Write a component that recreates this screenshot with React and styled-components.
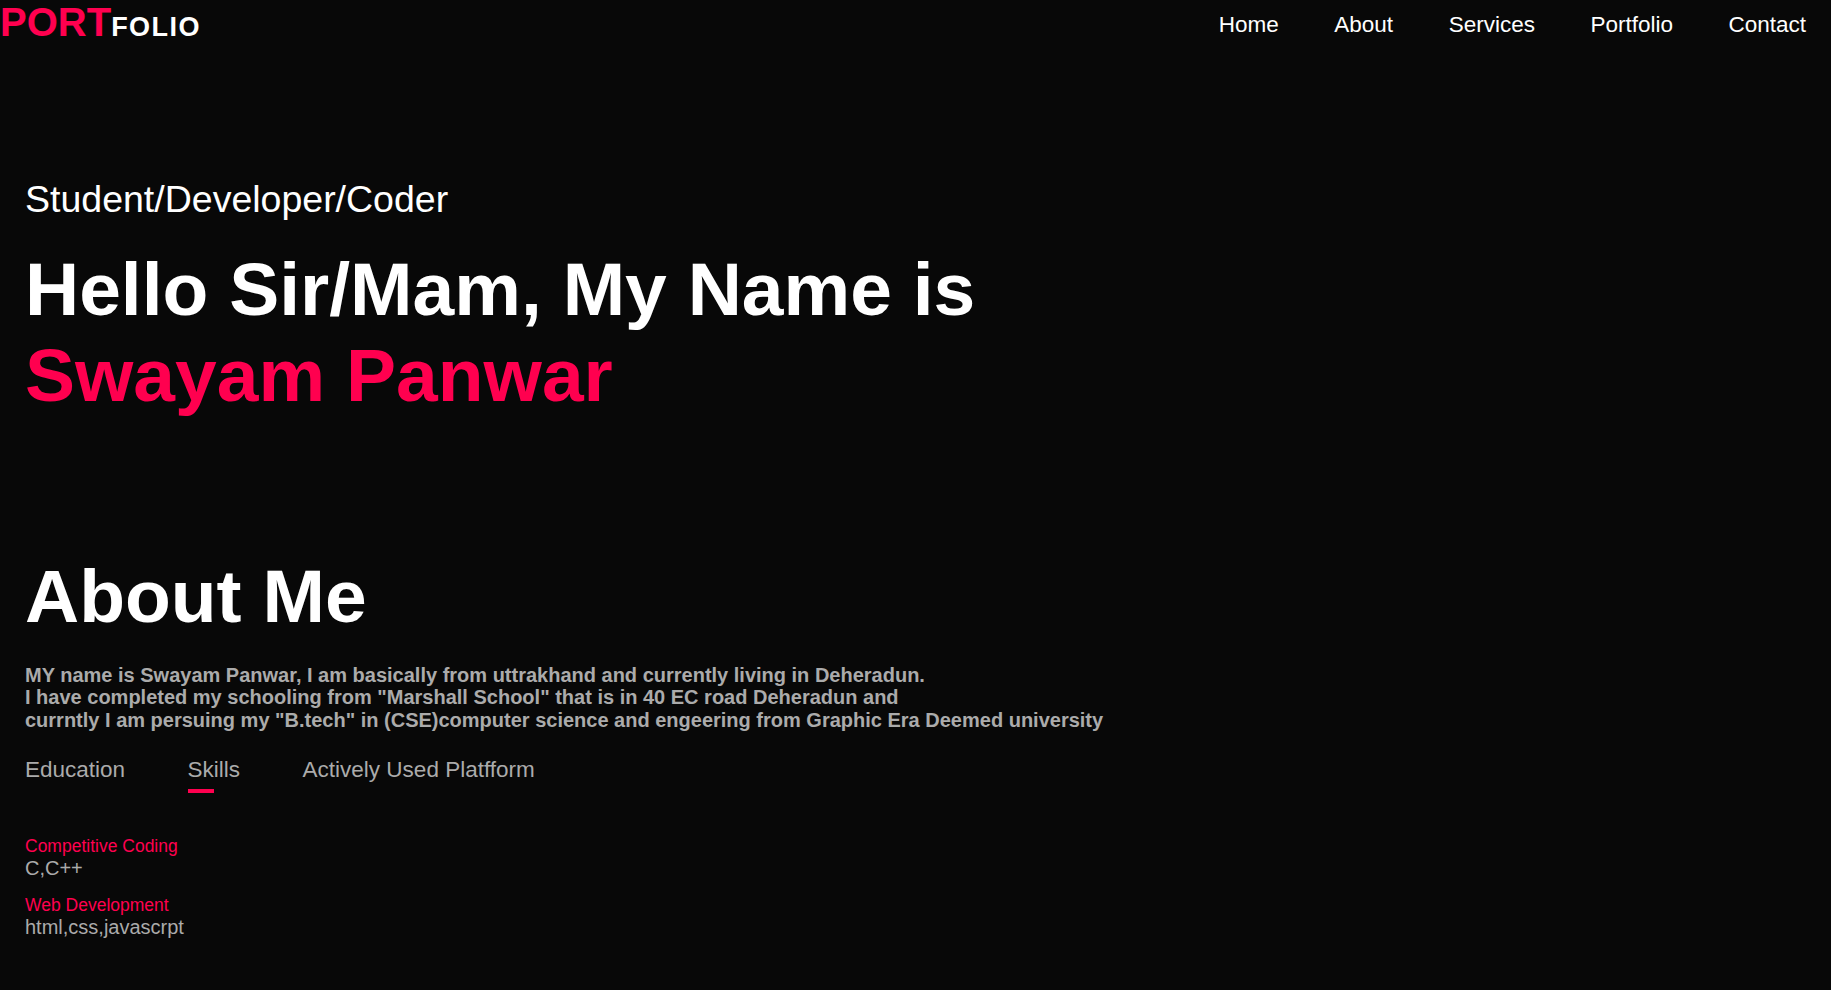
import React, { useState } from 'react';
import styled, { createGlobalStyle } from 'styled-components';

const RED = '#ff004f';
const MUTED = '#ababab';

const GlobalStyle = createGlobalStyle`
  * {
    box-sizing: border-box;
  }
  body {
    margin: 0;
    background: #080808;
    color: #fff;
    font-family: "Liberation Sans", Arial, sans-serif;
  }
`;

const Nav = styled.nav`
  display: flex;
  justify-content: space-between;
  align-items: flex-start;
  height: 50px;
`;

const Logo = styled.div`
  margin-top: 0;
  font-weight: 700;
  white-space: nowrap;
`;

const LogoRed = styled.span`
  color: ${RED};
  font-size: 40px;
`;

const LogoWhite = styled.span`
  color: #fff;
  font-size: 27px;
  letter-spacing: 1.5px;
`;

const NavList = styled.ul`
  display: flex;
  gap: 55.5px;
  list-style: none;
  margin: 12px 25px 0 0;
  padding: 0;
`;

const NavLink = styled.a`
  color: #fff;
  text-decoration: none;
  font-size: 22.5px;
  cursor: pointer;
`;

const Section = styled.section`
  padding: 0 25px;
`;

const HeaderText = styled(Section)`
  margin-top: 128px;
`;

const Tagline = styled.p`
  margin: 0;
  font-size: 37.5px;
`;

const Headline = styled.h1`
  margin: 25px 0 0;
  font-size: 75px;
  font-weight: 700;
  span {
    color: ${RED};
  }
`;

const About = styled(Section)`
  margin-top: 135px;
  color: ${MUTED};
`;

const SubTitle = styled.h1`
  margin: 0;
  font-size: 75px;
  font-weight: 700;
  color: #fff;
`;

const Bio = styled.p`
  margin: 25px 0 0;
  font-size: 20px;
  font-weight: 700;
  line-height: 22.4px;
`;

const TabTitles = styled.div`
  display: flex;
  gap: 62.5px;
  margin: 26px 0 51px;
`;

const TabLink = styled.p`
  position: relative;
  margin: 0;
  font-size: 22.5px;
  cursor: pointer;
  &::after {
    content: '';
    position: absolute;
    left: 0;
    bottom: -10px;
    height: 3.75px;
    width: ${(p) => (p.$active ? '50%' : '0')};
    background: ${RED};
  }
`;

const TabList = styled.ul`
  list-style: none;
  margin: 0;
  padding: 0;
  font-size: 20px;
  li {
    margin: 12.5px 0;
  }
  li:first-child {
    margin-top: 0;
  }
`;

const Label = styled.span`
  color: ${RED};
  font-size: 17.5px;
`;

const links = ['Home', 'About', 'Services', 'Portfolio', 'Contact'];
const tabs = ['Education', 'Skills', 'Actively Used Platfform'];

const skills = [
  { label: 'Competitive Coding', value: 'C,C++' },
  { label: 'Web Development', value: 'html,css,javascrpt' },
];

export default function App() {
  const [tab, setTab] = useState('Skills');

  return (
    <>
      <GlobalStyle />
      <Nav>
        <Logo>
          <LogoRed>PORT</LogoRed>
          <LogoWhite>FOLIO</LogoWhite>
        </Logo>
        <NavList>
          {links.map((l) => (
            <li key={l}>
              <NavLink>{l}</NavLink>
            </li>
          ))}
        </NavList>
      </Nav>

      <HeaderText>
        <Tagline>Student/Developer/Coder</Tagline>
        <Headline>
          Hello Sir/Mam, My Name is
          <br />
          <span>Swayam Panwar</span>
        </Headline>
      </HeaderText>

      <About>
        <SubTitle>About Me</SubTitle>
        <Bio>
          MY name is Swayam Panwar, I am basically from uttrakhand and currently living in Deheradun.
          <br />
          I have completed my schooling from "Marshall School" that is in 40 EC road Deheradun and
          <br />
          currntly I am persuing my "B.tech" in (CSE)computer science and engeering from Graphic Era Deemed university
        </Bio>
        <TabTitles>
          {tabs.map((t) => (
            <TabLink key={t} $active={t === tab} onClick={() => setTab(t)}>
              {t}
            </TabLink>
          ))}
        </TabTitles>
        <TabList>
          {skills.map((s) => (
            <li key={s.label}>
              <Label>{s.label}</Label>
              <br />
              {s.value}
            </li>
          ))}
        </TabList>
      </About>
    </>
  );
}
